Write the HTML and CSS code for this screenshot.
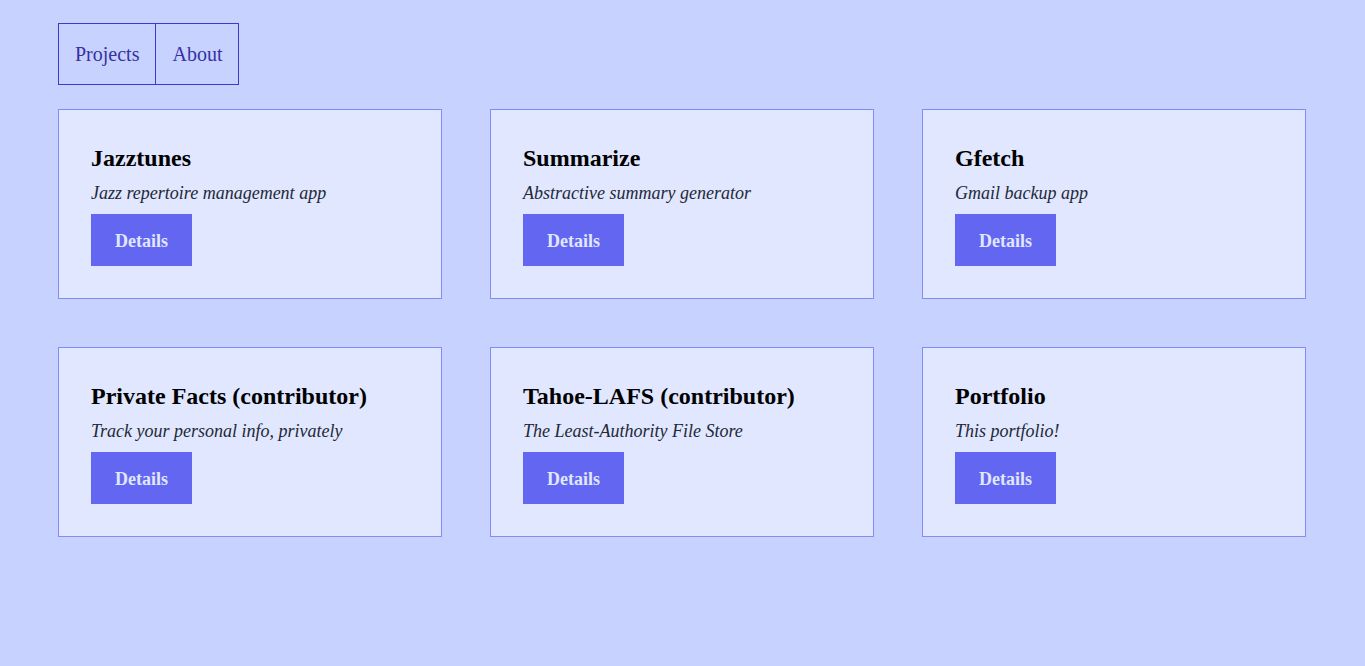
FILE: index.html
```html
<!DOCTYPE html>
<html>
<head>
<meta charset="utf-8">
<title>Projects</title>
<link rel="stylesheet" href="styles.css">
</head>
<body>
<div class="page">
  <nav class="nav">
    <a class="nav-item" href="#">Projects</a>
    <a class="nav-item" href="#">About</a>
  </nav>
  <main class="grid">
    <div class="card">
      <h2 class="card-title">Jazztunes</h2>
      <p class="card-desc">Jazz repertoire management app</p>
      <a class="btn" href="#">Details</a>
    </div>
    <div class="card">
      <h2 class="card-title">Summarize</h2>
      <p class="card-desc">Abstractive summary generator</p>
      <a class="btn" href="#">Details</a>
    </div>
    <div class="card">
      <h2 class="card-title">Gfetch</h2>
      <p class="card-desc">Gmail backup app</p>
      <a class="btn" href="#">Details</a>
    </div>
    <div class="card">
      <h2 class="card-title">Private Facts (contributor)</h2>
      <p class="card-desc">Track your personal info, privately</p>
      <a class="btn" href="#">Details</a>
    </div>
    <div class="card">
      <h2 class="card-title">Tahoe-LAFS (contributor)</h2>
      <p class="card-desc">The Least-Authority File Store</p>
      <a class="btn" href="#">Details</a>
    </div>
    <div class="card">
      <h2 class="card-title">Portfolio</h2>
      <p class="card-desc">This portfolio!</p>
      <a class="btn" href="#">Details</a>
    </div>
  </main>
</div>
</body>
</html>
```

FILE: styles.css
```css
html, body {
  margin: 0;
  padding: 0;
  background: #c7d2fe;
  font-family: "Liberation Serif", "Times New Roman", serif;
}

.page {
  padding: 23px 58px;
}

.nav {
  display: inline-flex;
  border: 1px solid #4338ca;
}

.nav-item {
  display: block;
  padding: 16px;
  font-size: 20px;
  line-height: 28px;
  color: #3730a3;
  text-decoration: none;
}

.nav-item + .nav-item {
  border-left: 1px solid #4338ca;
}

.grid {
  margin-top: 24px;
  display: grid;
  grid-template-columns: repeat(3, 384px);
  column-gap: 48px;
  row-gap: 48px;
}

.card {
  background: #e0e7ff;
  border: 1px solid #818cf8;
  padding: 32px;
  display: flex;
  flex-direction: column;
  align-items: flex-start;
}

.card-title {
  margin: 0;
  font-size: 24px;
  line-height: 32px;
  font-weight: bold;
  color: #000;
}

.card-desc {
  margin: 5px 0 7px;
  font-size: 18px;
  line-height: 28px;
  font-style: italic;
  color: #1f2937;
}

.btn {
  display: block;
  background: #6366f1;
  color: #e0e7ff;
  font-size: 18px;
  font-weight: bold;
  line-height: 28px;
  padding: 13px 24px 11px;
  text-decoration: none;
}
```
